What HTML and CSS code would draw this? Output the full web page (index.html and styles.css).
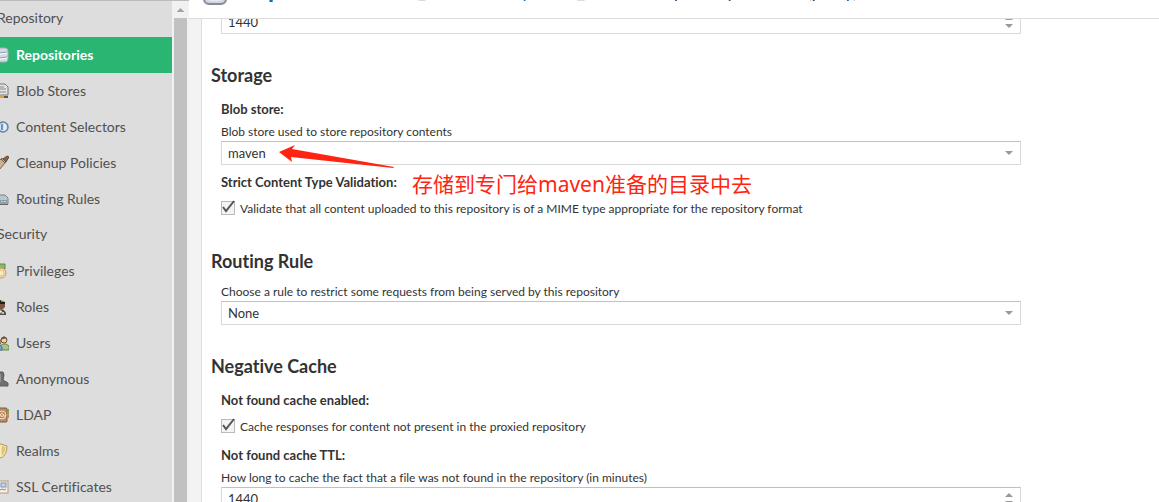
FILE: index.html
```
<!DOCTYPE html>
<html lang="en">
<head>
  <meta charset="UTF-8">
  <title>Create Repository</title>
  <link rel="stylesheet" href="styles.css">
</head>
<body>
  <nav class="sidebar">
    <div class="menu">
      <div class="menu-group">Repository</div>
      <a class="menu-item active" href="#">
        <svg width="16" height="16" viewBox="0 0 16 16"><rect x="1" y="1" width="14" height="14" rx="3" fill="#d3dbe6" stroke="#a3adba"/><path d="M2 5q6 2 12 0M2 10q6 2 12 0" fill="none" stroke="#8794a3"/><path d="M2 6q6 2 12 0M2 11q6 2 12 0" fill="none" stroke="#fff"/></svg>
        Repositories</a>
      <a class="menu-item" href="#">
        <svg width="16" height="16" viewBox="0 0 16 16"><path d="M2 1h10l3 3v8H2z" fill="#e4e4e4" stroke="#777"/><path d="M4 4h7M4 6h9M4 9h9" stroke="#888"/><path d="M2 14h13" stroke="#555" stroke-width="2"/><path d="M7 14h4" stroke="#e0a040" stroke-width="2"/></svg>
        Blob Stores</a>
      <a class="menu-item" href="#">
        <svg width="16" height="16" viewBox="0 0 16 16"><circle cx="10" cy="8" r="5" fill="#cfe0f2" stroke="#6685a8" stroke-width="1.500"/><path d="M9 5v6" stroke="#5578a5" stroke-width="1.500"/><path d="M12 5v6" stroke="#fff"/></svg>
        Content Selectors</a>
      <a class="menu-item" href="#">
        <svg width="16" height="16" viewBox="0 0 16 16"><path d="M2 10l7-7 4 4-7 8-4-1z" fill="#c9b190" stroke="#7d684d"/><path d="M10 4l4-3 2 1-3 5z" fill="#8a6048" stroke="#6b4636"/><path d="M8 4l4 4M4 10l3 3" stroke="#6d6358"/></svg>
        Cleanup Policies</a>
      <a class="menu-item" href="#">
        <svg width="16" height="16" viewBox="0 0 16 16"><path d="M1 7l3-3h8l3 3v6H1z" fill="#b5c9d3" stroke="#78858c"/><path d="M2 9h12v3H2z" fill="#8b9a9d"/><path d="M8 10.500h2M11 10.500h2" stroke="#d7e58c"/><path d="M1 13.500h14" stroke="#666"/></svg>
        Routing Rules</a>
      <div class="menu-group">Security</div>
      <a class="menu-item" href="#">
        <svg width="16" height="16" viewBox="0 0 16 16"><path d="M3 1h9v5H3z" fill="#8fb66f" stroke="#5c8a45"/><circle cx="8" cy="10" r="5" fill="#f2ddab" stroke="#c49a59"/><circle cx="8" cy="10" r="3" fill="#f8e8c4" stroke="#dcc08a"/></svg>
        Privileges</a>
      <a class="menu-item" href="#">
        <svg width="16" height="16" viewBox="0 0 16 16"><path d="M1 16v-3l5-3 5 1 2 3v2z" fill="#4b4e57"/><path d="M4 4h8v4l-3 3-4-2z" fill="#7c5442"/><path d="M2 3l5-2 5 2v2H3z" fill="#222"/><path d="M8 2h3" stroke="#e9c542"/><path d="M6 11l3 1-1 3z" fill="#eee"/><path d="M10 13v2" stroke="#e9c542" stroke-width="2"/></svg>
        Roles</a>
      <a class="menu-item" href="#">
        <svg width="16" height="16" viewBox="0 0 16 16"><path d="M7 15v-4l3-2h3l3 2v4z" fill="#a9c48c" stroke="#68874d"/><circle cx="11" cy="5" r="3" fill="#f0d0b0" stroke="#765039"/><path d="M8 4q3-4 6 0l-2-1z" fill="#765039" stroke="#765039"/><circle cx="5" cy="7" r="3" fill="#e4bf91" stroke="#8b6847"/><path d="M1 15v-3l3-2h3l2 2v3z" fill="#7da5dc" stroke="#416fac"/></svg>
        Users</a>
      <a class="menu-item" href="#">
        <svg width="16" height="16" viewBox="0 0 16 16"><path d="M5 1h5l1 3-1 5 5 3v3H1v-3l4-3-1-5z" fill="#707070" stroke="#5b5b5b"/><path d="M7 3v8" stroke="#929292" stroke-width="2"/></svg>
        Anonymous</a>
      <a class="menu-item" href="#">
        <svg width="16" height="16" viewBox="0 0 16 16"><rect x="1" y="1" width="13" height="14" rx="1" fill="#b98b63" stroke="#80583a"/><path d="M15 2v4" stroke="#77a756" stroke-width="2"/><path d="M15 6v5" stroke="#d88445" stroke-width="2"/><circle cx="9" cy="8" r="4" fill="none" stroke="#f3ddc4"/><circle cx="9" cy="8" r="1.500" fill="none" stroke="#f3ddc4"/><path d="M10.500 7v2q2 1 2-1" fill="none" stroke="#f3ddc4"/></svg>
        LDAP</a>
      <a class="menu-item" href="#">
        <svg width="16" height="16" viewBox="0 0 16 16"><path d="M1 3l7-2 6 2q0 9-6 12Q1 12 1 3z" fill="#f3e2a8" stroke="#b79a5a"/><path d="M8 3l4 1q0 6-4 9z" fill="#dcc27b"/><path d="M8 2v12" stroke="#fff5d0"/></svg>
        Realms</a>
      <a class="menu-item" href="#">
        <svg width="16" height="16" viewBox="0 0 16 16"><rect x="1" y="2" width="14" height="12" fill="#f7f3e8" stroke="#b89b70"/><rect x="8" y="4" width="5" height="4" fill="#c6d6ee" stroke="#7890b8"/><path d="M3 6h4M3 9h4M7 11l2-1 2 1 2-1" fill="none" stroke="#6d87b5"/></svg>
        SSL Certificates</a>
    </div>
  </nav>
  <div class="scrollbar"><div class="scroll-up"></div><div class="scroll-thumb"></div></div>

  <main class="content">
    <header class="breadcrumb">
      <svg width="24" height="26" viewBox="0 0 24 26"><rect x="1" y="1" width="22" height="24" rx="5" fill="#cfd5e0" stroke="#858d98" stroke-width="2"/><path d="M4 20q8 3 16 0" fill="none" stroke="#e4e8ef" stroke-width="2"/></svg>
      <a class="crumb-root" href="#">Repositories</a>
      <svg class="crumb-icon" width="12" height="16" viewBox="0 0 12 16"><rect x="1" y="1" width="10" height="14" rx="2" fill="#ddd" stroke="#bbb"/></svg>
      <a class="crumb-step" href="#">Select Recipe</a>
      <svg class="crumb-icon" width="12" height="16" viewBox="0 0 12 16"><rect x="1" y="1" width="10" height="14" rx="2" fill="#ddd" stroke="#bbb"/></svg>
      <span class="crumb-current">Create Repository: maven2 (proxy)</span>
    </header>

    <div class="panel">
      <form class="form">
        <div class="control spinner"><input type="number" value="1440" aria-label="Maximum metadata age"></div>

        <h2>Storage</h2>
        <div class="fields">
          <label class="title" for="blobStore">Blob store:</label>
          <p class="help">Blob store used to store repository contents</p>
          <div class="control dropdown">
            <select id="blobStore"><option>maven</option></select>
            <svg class="arrow" width="116" height="24" viewBox="0 0 116 24"><path d="M0 8L16 1 13 5 115 23 114 24 12 13 13 18z" fill="#ff2412"/></svg>
          </div>
          <div class="title">Strict Content Type Validation:
            <span class="note" lang="zh">存储到专门给maven准备的目录中去</span>
          </div>
          <div class="check">
            <input type="checkbox" id="strict" checked>
            <svg class="tick" width="14" height="14" viewBox="0 0 14 14"><path d="M2 7l3 4 8-10" fill="none" stroke="#555" stroke-width="2"/></svg>
            <label for="strict">Validate that all content uploaded to this repository is of a MIME type appropriate for the repository format</label>
          </div>
        </div>

        <h2>Routing Rule</h2>
        <div class="fields">
          <label class="help" for="routingRule">Choose a rule to restrict some requests from being served by this repository</label>
          <div class="control dropdown">
            <select id="routingRule"><option>None</option></select>
          </div>
        </div>

        <h2>Negative Cache</h2>
        <div class="fields">
          <div class="title">Not found cache enabled:</div>
          <div class="check">
            <input type="checkbox" id="cache" checked>
            <svg class="tick" width="14" height="14" viewBox="0 0 14 14"><path d="M2 7l3 4 8-10" fill="none" stroke="#555" stroke-width="2"/></svg>
            <label for="cache">Cache responses for content not present in the proxied repository</label>
          </div>
          <label class="title" for="ttl">Not found cache TTL:</label>
          <p class="help">How long to cache the fact that a file was not found in the repository (in minutes)</p>
          <div class="control spinner"><input type="number" id="ttl" value="1440"></div>
        </div>
      </form>
    </div>
  </main>
</body>
</html>
```
FILE: styles.css
```
* {
  box-sizing: border-box;
}
body {
  display: flex;
  height: 100vh;
  margin: 0;
  overflow: hidden;
  font-family: Lato, "Open Sans", sans-serif;
  font-size: 12px;
  font-variant-ligatures: none;
  color: #333;
  background: #fff;
}
a {
  color: inherit;
  text-decoration: none;
}

/* left menu */
.sidebar {
  flex: 0 0 172px;
  overflow: hidden;
  border-top: 1px solid #bbb;
  background: #ddd;
}
.menu {
  margin-left: -7px;
  font-size: 14px;
  line-height: 36px;
  color: #505050;
}
.menu-group {
  height: 36px;
  padding-left: 4px;
  line-height: 34px;
}
.menu-item {
  display: flex;
  align-items: center;
  gap: 7px;
  height: 36px;
}
.menu-item.active {
  background: #2ab573;
  color: #fff;
  font-weight: bold;
}
.scrollbar {
  display: flex;
  flex: 0 0 17px;
  flex-direction: column;
  align-items: center;
  border-top: 1px solid #bbb;
  background: #f1f1f1;
}
.scroll-up {
  width: 8px;
  height: 4px;
  margin: 7px 0 6px;
  background: #a3a3a3;
  clip-path: polygon(50% 0, 100% 100%, 0 100%);
}
.scroll-thumb {
  flex: 1;
  width: 13px;
  background: #c1c1c1;
}

/* right side */
.content {
  display: flex;
  flex: 1;
  flex-direction: column;
  min-width: 0;
}
.breadcrumb {
  display: flex;
  flex: 0 0 19px;
  align-items: flex-end;
  overflow: hidden;
  padding: 0 14px 13px;
  border-bottom: 1px solid #ddd;
  white-space: nowrap;
}
.breadcrumb svg {
  flex: none;
}
.breadcrumb a,
.breadcrumb span {
  margin-bottom: 4px;
}
.breadcrumb .crumb-root {
  margin-left: 11px;
  font-size: 26px;
  line-height: 26px;
  font-weight: bold;
  color: #0b6fc2;
}
.crumb-icon {
  margin: 0 14px 4px 34px;
}
.crumb-step,
.crumb-current {
  font-size: 17px;
  line-height: 18px;
}
.crumb-step {
  color: #0b6fc2;
}
.panel {
  flex: 1;
  min-height: 0;
  overflow: hidden;
  margin-left: 12px;
  border-left: 1px solid #ddd;
  box-shadow: -12px 0 #f3f3f3;
}
.form {
  max-width: 819px;
  margin-top: -9px;
}
.form > .control,
.fields {
  margin-left: 19px;
}
h2 {
  margin: 29px 0 10px 9px;
  font-size: 18px;
  line-height: 24px;
}
.title,
.help {
  display: block;
  margin: 0;
  line-height: 18px;
}
.title {
  position: relative;
  padding-top: 3px;
  margin-bottom: 5px;
  font-size: 13px;
  font-weight: bold;
}
.control {
  position: relative;
  height: 24px;
  margin-bottom: 5px;
}
.control input,
.control select {
  display: block;
  width: 100%;
  height: 24px;
  padding: 0 6px;
  border: 1px solid #d9d9d9;
  border-top-color: #c0c0c0;
  border-radius: 0;
  appearance: none;
  -moz-appearance: textfield;
  background: #fff;
  color: #333;
  font-family: inherit;
  font-size: 13px;
}
.control input::-webkit-inner-spin-button {
  display: none;
}
.dropdown::after,
.spinner::before,
.spinner::after {
  content: "";
  position: absolute;
  right: 8px;
  width: 8px;
  height: 4px;
  background: #999;
  clip-path: polygon(0 0, 100% 0, 50% 100%);
}
.dropdown::after {
  top: 10px;
}
.spinner::before {
  top: 6px;
  clip-path: polygon(50% 0, 100% 100%, 0 100%);
}
.spinner::after {
  top: 14px;
}
.check {
  position: relative;
  display: flex;
  align-items: center;
  gap: 5px;
  height: 21px;
  padding-bottom: 3px;
  margin: 8px 0 5px;
}
.check input {
  width: 14px;
  height: 14px;
  margin: 0;
  border: 1px solid #bbb;
  appearance: none;
  background: #f4f4f4;
}
.tick {
  position: absolute;
  top: 1px;
  left: 0;
  pointer-events: none;
}

/* red marks drawn over the form */
.arrow {
  position: absolute;
  top: 3px;
  left: 58px;
}
.note {
  position: absolute;
  top: 0;
  left: 191px;
  font-family: "Noto Sans", "Noto Sans CJK SC", sans-serif;
  font-size: 21px;
  line-height: 28px;
  font-weight: normal;
  white-space: nowrap;
  color: #ff2412;
}
```
